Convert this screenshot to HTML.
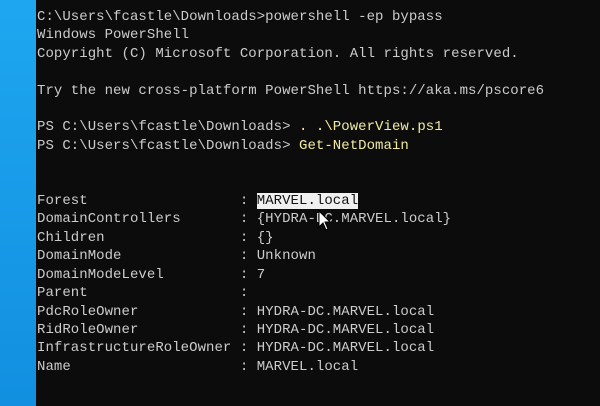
<!DOCTYPE html>
<html><head><style>
html,body{margin:0;padding:0;width:600px;height:406px;overflow:hidden;background:#0c0c0c}
.strip{position:absolute;left:0;top:0;width:36px;height:406px;background:linear-gradient(#1ea7f0,#128fe0)}
pre{position:absolute;left:37px;top:8px;margin:0;font-family:"Liberation Mono",monospace;font-size:14px;line-height:18.4px;color:#cccccc;letter-spacing:0.05px}
.y{color:#f2eba0}
.h{background:#f0f0f0;color:#111}
</style></head><body>
<div class="strip"></div>
<pre>C:\Users\fcastle\Downloads>powershell -ep bypass
Windows PowerShell
Copyright (C) Microsoft Corporation. All rights reserved.

Try the new cross-platform PowerShell https://aka.ms/pscore6

PS C:\Users\fcastle\Downloads> <span class="y">. .\PowerView.ps1</span>
PS C:\Users\fcastle\Downloads> <span class="y">Get-NetDomain</span>


Forest                  : <span class="h">MARVEL.local</span>
DomainControllers       : {HYDRA-DC.MARVEL.local}
Children                : {}
DomainMode              : Unknown
DomainModeLevel         : 7
Parent                  :
PdcRoleOwner            : HYDRA-DC.MARVEL.local
RidRoleOwner            : HYDRA-DC.MARVEL.local
InfrastructureRoleOwner : HYDRA-DC.MARVEL.local
Name                    : MARVEL.local</pre>
<svg style="position:absolute;left:318px;top:210px" width="14" height="22" viewBox="0 0 14 22"><path d="M1 1 L1 17 L5 13 L8 20 L10 19 L7 12 L12 12 Z" fill="#fff" stroke="#000" stroke-width="1"/></svg>
</body></html>
